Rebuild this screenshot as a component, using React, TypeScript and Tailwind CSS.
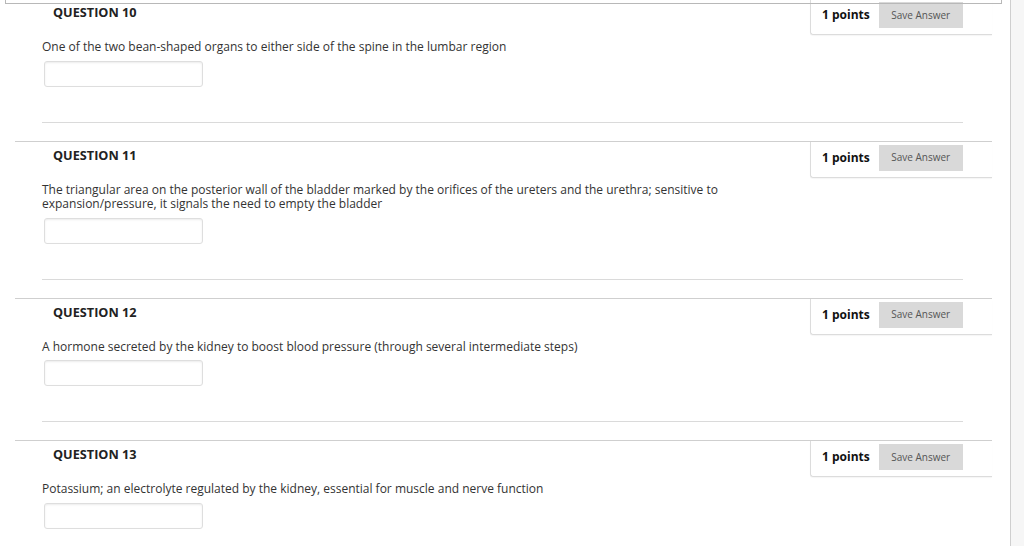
import React from 'react';

interface Question {
  num: number;
  text: string;
}

const questions: Question[] = [
  { num: 10, text: 'One of the two bean-shaped organs to either side of the spine in the lumbar region' },
  {
    num: 11,
    text: 'The triangular area on the posterior wall of the bladder marked by the orifices of the ureters and the urethra; sensitive to expansion/pressure, it signals the need to empty the bladder',
  },
  { num: 12, text: 'A hormone secreted by the kidney to boost blood pressure (through several intermediate steps)' },
  { num: 13, text: 'Potassium; an electrolyte regulated by the kidney, essential for muscle and nerve function' },
];

const QuestionBlock: React.FC<{ q: Question; first?: boolean }> = ({ q, first }) => (
  <div className={`ml-[15px] w-[977px] border-t border-[#cfcfcf] ${first ? '-mt-[6px]' : ''}`}>
    {/* header */}
    <div className="flex items-start justify-between">
      <h3 className="pl-[38px] pt-[5px] text-[12.7px] font-bold leading-4 text-[#222] uppercase">
        Question {q.num}
      </h3>
      <div className="flex h-[36px] w-[182px] items-start rounded-bl-[3px] border-b border-l border-[#dcdcdc] pl-[11px] pt-[3px] shadow-[0_1px_1px_rgba(0,0,0,0.04)]">
        <span className="flex h-[26px] items-center text-[12px] font-bold text-[#111]">1 points</span>
        <button
          type="button"
          className="ml-[9px] h-[26px] w-[84px] bg-[#d9d9d9] text-[10px] text-[#555]"
        >
          Save Answer
        </button>
      </div>
    </div>
    {/* body */}
    <div className="pl-[27px]">
      <p className="mt-[5px] w-[720px] text-[12px] leading-[14.5px] text-[#333]">{q.text}</p>
      <input
        type="text"
        className="mt-[6px] ml-[2px] block h-[26px] w-[159px] rounded-[3px] border border-[#dedede] bg-white shadow-[inset_0_1px_2px_rgba(0,0,0,0.08)] outline-none"
      />
      <div className="mt-[35px] mb-[18px] mr-[29px] border-t border-[#dadada]" />
    </div>
  </div>
);

export default function App() {
  return (
    <div
      className="flex h-[546px] w-[1024px] overflow-hidden bg-white"
      style={{ fontFamily: '"Open Sans", "Liberation Sans", sans-serif' }}
    >
      <div className="w-[1010px] shrink-0">
        <div className="relative z-10 ml-[5px] h-[4px] w-[997px] border-x border-b border-[#b8b8b8]" />
        {questions.map((q, i) => (
          <QuestionBlock key={q.num} q={q} first={i === 0} />
        ))}
      </div>
      <div className="flex-1 border-l border-[#cfcfcf] bg-[#f6f6f6]" />
    </div>
  );
}
